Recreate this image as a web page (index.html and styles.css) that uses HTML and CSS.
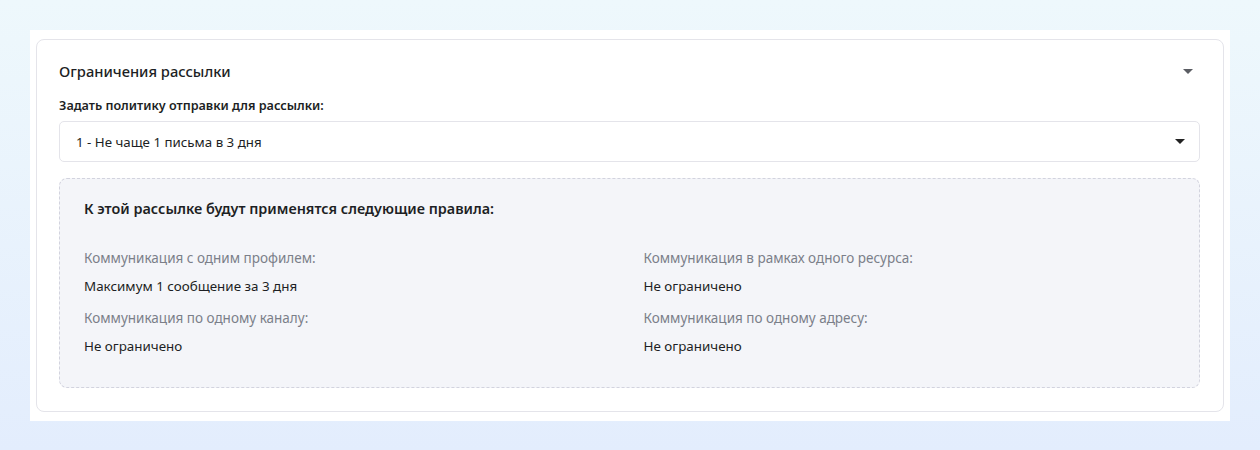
FILE: index.html
```html
<!DOCTYPE html>
<html lang="ru">
<head>
  <meta charset="UTF-8" />
  <title>Ограничения рассылки</title>
  <link rel="stylesheet" href="styles.css">
</head>
<body>
  <div class="sheet">
    <div class="card">
      <div class="card-head">
        <h2>Ограничения рассылки</h2>
        <span class="caret caret-grey"></span>
      </div>

      <label class="field-label" for="policy">Задать политику отправки для рассылки:</label>
      <div class="select" id="policy">
        <span>1 - Не чаще 1 письма в 3 дня</span>
        <span class="caret"></span>
      </div>

      <div class="rules">
        <h3>К этой рассылке будут применятся следующие правила:</h3>
        <div class="rules-grid">
          <div class="rule">
            <div class="rule-name">Коммуникация с одним профилем:</div>
            <div class="rule-value">Максимум 1 сообщение за 3 дня</div>
          </div>
          <div class="rule">
            <div class="rule-name">Коммуникация в рамках одного ресурса:</div>
            <div class="rule-value">Не ограничено</div>
          </div>
          <div class="rule">
            <div class="rule-name">Коммуникация по одному каналу:</div>
            <div class="rule-value">Не ограничено</div>
          </div>
          <div class="rule">
            <div class="rule-name">Коммуникация по одному адресу:</div>
            <div class="rule-value">Не ограничено</div>
          </div>
        </div>
      </div>
    </div>
  </div>
</body>
</html>
```

FILE: styles.css
```css
html, body {
  height: 100%;
}

body {
  margin: 0;
  padding: 30px 30px 0;
  box-sizing: border-box;
  font-family: 'Noto Sans', 'Open Sans', sans-serif;
  color: #1d1f24;
  background: linear-gradient(180deg, #eef8fc 0%, #e3edfd 100%);
}

.sheet {
  background: #ffffff;
  padding: 9px 6px 9px 6px;
}

.card {
  border: 1px solid #e4e4ea;
  border-radius: 8px;
  padding: 19px 23px 23px 22px;
}

.card-head {
  display: flex;
  align-items: center;
  justify-content: space-between;
  height: 24px;
}

.card-head h2 {
  margin: 0;
  font-size: 14.7px;
  font-weight: 500;
}

.caret {
  width: 0;
  height: 0;
  border-left: 5px solid transparent;
  border-right: 5px solid transparent;
  border-top: 5px solid #222;
}

.caret-grey {
  border-top-color: #5b5d63;
  margin-right: 7px;
}

.field-label {
  display: block;
  margin-top: 14px;
  font-size: 12.6px;
  font-weight: 600;
  line-height: 18px;
}

.select {
  margin-top: 6px;
  height: 39px;
  border: 1px solid #e4e4ea;
  border-radius: 5px;
  display: flex;
  align-items: center;
  justify-content: space-between;
  padding: 0 14px 0 16px;
  font-size: 13.3px;
}

.rules {
  margin-top: 16px;
  background: #f4f5f9;
  border: 1px dashed #d2d3de;
  border-radius: 8px;
  padding: 19px 24px 31px;
}

.rules h3 {
  margin: 0 0 28px;
  font-size: 14.4px;
  font-weight: 600;
  line-height: 22px;
}

.rules-grid {
  display: grid;
  grid-template-columns: 1fr 1fr;
  column-gap: 28px;
  row-gap: 12px;
}

.rule-name {
  color: #7b7f89;
  font-size: 13.5px;
  line-height: 20px;
}

.rule-value {
  margin-top: 8px;
  font-size: 13.4px;
  line-height: 20px;
}
```
